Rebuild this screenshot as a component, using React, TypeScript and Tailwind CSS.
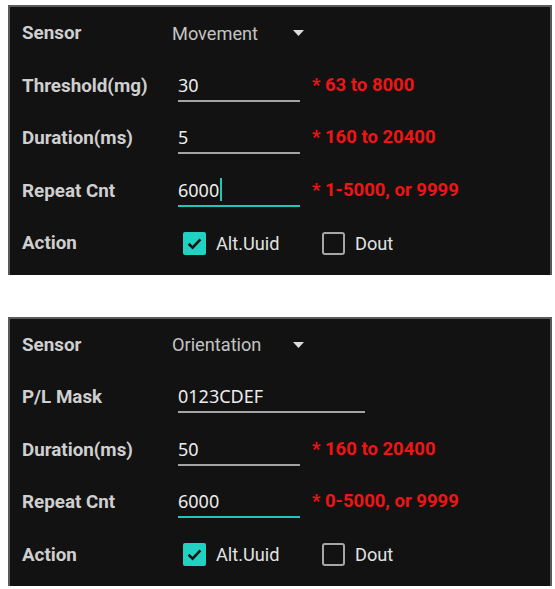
import React from "react";

type Row =
  | { kind: "select"; label: string; value: string }
  | { kind: "input"; label: string; value: string; hint?: string; focused?: boolean; caret?: boolean; wide?: boolean }
  | { kind: "action"; label: string };

const panels: Row[][] = [
  [
    { kind: "select", label: "Sensor", value: "Movement" },
    { kind: "input", label: "Threshold(mg)", value: "30", hint: "* 63 to 8000" },
    { kind: "input", label: "Duration(ms)", value: "5", hint: "* 160 to 20400" },
    { kind: "input", label: "Repeat Cnt", value: "6000", hint: "* 1-5000, or 9999", focused: true, caret: true },
    { kind: "action", label: "Action" },
  ],
  [
    { kind: "select", label: "Sensor", value: "Orientation" },
    { kind: "input", label: "P/L Mask", value: "0123CDEF", wide: true },
    { kind: "input", label: "Duration(ms)", value: "50", hint: "* 160 to 20400" },
    { kind: "input", label: "Repeat Cnt", value: "6000", hint: "* 0-5000, or 9999", focused: true },
    { kind: "action", label: "Action" },
  ],
];

const Check = ({ checked, text }: { checked: boolean; text: string }) => (
  <div className="flex items-center">
    {checked ? (
      <div className="w-[23px] h-[23px] rounded-[2px] bg-[#1fd2c1] flex items-center justify-center">
        <svg width="17" height="17" viewBox="0 0 17 17">
          <path d="M2.6 8.8 L6.6 12.6 L14.4 4.4" fill="none" stroke="#141414" strokeWidth="2.6" />
        </svg>
      </div>
    ) : (
      <div className="w-[23px] h-[23px] rounded-[3px] border-[2.5px] border-[#a6a6a6]" />
    )}
    <span className="ml-[10px] text-[18.2px] text-[#e2e2e2]">{text}</span>
  </div>
);

const FormRow = ({ row }: { row: Row }) => (
  <div className="h-[52.5px] flex items-center">
    <div className="w-[156px] font-bold text-[18.8px] text-[#cfcfcf]">{row.label}</div>
    {row.kind === "select" && (
      <div className="w-[132px] -ml-[6px] flex items-center justify-between">
        <span className="text-[18.2px] text-[#c4c4c4]">{row.value}</span>
        <svg width="11" height="6" viewBox="0 0 11 6">
          <path d="M0 0 H11 L5.5 6 Z" fill="#dcdcdc" />
        </svg>
      </div>
    )}
    {row.kind === "input" && (
      <>
        <div
          className={`${row.wide ? "w-[187px]" : "w-[122px]"} h-[32px] flex items-center border-b-2 ${
            row.focused ? "border-[#1dc8b8]" : "border-[#a4a4a4]"
          }`}
        >
          <span className="text-[18px] text-[#ededed] leading-none [font-family:'Noto_Sans',sans-serif]">
            {row.value}
          </span>
          {row.caret && <span className="w-[2px] h-[23px] bg-[#1dc8b8] ml-[1px]" />}
        </div>
        {row.hint && (
          <span className="ml-[12px] font-bold text-[18.5px] text-[#f01414]">{row.hint}</span>
        )}
      </>
    )}
    {row.kind === "action" && (
      <div className="flex items-center pl-[5px]">
        <div className="w-[139px]">
          <Check checked text="Alt.Uuid" />
        </div>
        <Check checked={false} text="Dout" />
      </div>
    )}
  </div>
);

export default function App() {
  return (
    <div className="w-[555px] h-[589px] bg-white pt-[5px] pl-[8px] overflow-hidden [font-family:Roboto,'Liberation_Sans',sans-serif]">
      {panels.map((rows, i) => (
        <div
          key={i}
          className={`w-[544px] bg-[#121212] border-t-2 border-x-2 border-[#5a5a5a] pl-[12px] pb-[5px] ${
            i === 1 ? "mt-[42px]" : ""
          }`}
        >
          {rows.map((r, j) => (
            <FormRow key={j} row={r} />
          ))}
        </div>
      ))}
    </div>
  );
}
